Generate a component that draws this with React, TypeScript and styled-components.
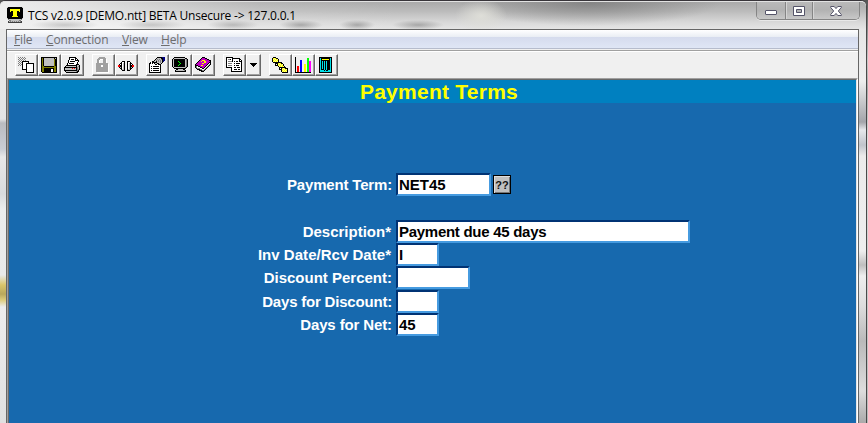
import React from "react";
import styled, { createGlobalStyle } from "styled-components";

const GlobalStyle = createGlobalStyle`
  * { box-sizing: border-box; }
  body { margin: 0; overflow: hidden; background: #b5b5b5; }
`;

const Window = styled.div`
  width: 868px;
  height: 423px;
  display: flex;
  flex-direction: column;
  padding-right: 1px;
  background: linear-gradient(#555, #c9c9c9 60px, #aaa 90px, #ddd 140px, #bbb);
  font-family: "Open Sans", "Noto Sans", sans-serif;
`;

const Frame = styled.div`
  flex: 1;
  display: flex;
  flex-direction: column;
  border-top: 1px solid #38353a;
  border-right: 1px solid #4a4a4a;
  border-top-right-radius: 6px;
  border-top-left-radius: 5px;
  background:
    linear-gradient(#eee0 28px, #e4e4e4 90px, #b9bbc0 94px, #c9cdd4 120px, #e8e8e8 128px, #d9dbdd 165px, #eceded 180px, #e9e9e9 246px, #d9c56a 256px, #b9a75c 265px, #ddcc7c 271px, #ededed 278px, #e0e0e0) left 28px / 6px 394px no-repeat,
    linear-gradient(#e6e6e6 28px, #eee 80px, #a3a5aa 121px, #e6e8eb 129px, #c0c4cb 144px, #ebebeb 155px, #eee 250px, #bfbfbf 264px, #eee 275px, #ddd 305px, #bababa 340px, #ddd 390px, #aaa) right top / 7px 422px no-repeat,
    #e8e8e8;
`;

const TitleBar = styled.header`
  height: 28px;
  display: flex;
  align-items: flex-start;
  padding: 0 7px;
  border-top: 1px solid #e2e2e2;
  border-top-right-radius: 5px;
  border-top-left-radius: 5px;
  background:
    radial-gradient(ellipse 34px 5px at 65px 23px, #9997, transparent),
    radial-gradient(ellipse 34px 5px at 152px 23px, #9997, transparent),
    radial-gradient(ellipse 26px 5px at 233px 23px, #8887, transparent),
    radial-gradient(ellipse 22px 5px at 301px 23px, #7778, transparent),
    radial-gradient(ellipse 18px 5px at 357px 23px, #7778, transparent),
    radial-gradient(ellipse 26px 5px at 418px 23px, #7778, transparent),
    radial-gradient(ellipse 26px 17px at 481px 14px, #deded8, transparent),
    linear-gradient(90deg, #eee 0, #fff9 90px, #fff2 260px, transparent 400px),
    radial-gradient(ellipse 130px 23px at 590px 1px, #777b, transparent),
    linear-gradient(#aaa, #bbb 9px, #d8d8d8 20px, #e5e5e5);
`;

const TitleIcon = styled.div`
  width: 16px;
  height: 16px;
  margin-top: 5px;
`;

const Title = styled.div`
  margin: 5px 0 0 5px;
  font-size: 12px;
  line-height: 17px;
  letter-spacing: -0.21px;
  color: #000;
  white-space: nowrap;
`;

const Controls = styled.div`
  margin-left: auto;
  margin-right: -1px;
  display: flex;
  height: 18px;
  border: 1px solid #858585;
  border-top: 0;
  border-radius: 0 0 5px 5px;
  box-shadow: 0 1px 0 #f5f5f599, inset 1px 0 #ddd9;
`;

const ControlButton = styled.div<{ $w: number }>`
  width: ${(p) => p.$w}px;
  display: flex;
  justify-content: center;
  align-items: center;
  background: linear-gradient(#b9b9b9, #b2b2b2 8px, #c8c8c8);
  & + & { border-left: 1px solid #858585; box-shadow: inset 1px 0 #d5d5d5; }
  &:first-child { border-radius: 0 0 0 4px; }
  &:last-child { border-radius: 0 0 4px 0; }
`;

const Client = styled.div`
  flex: 1;
  margin: 0 7px 0 6px;
  display: flex;
  flex-direction: column;
  border: solid #666;
  border-width: 1px 1px 0 1px;
`;

const MenuBar = styled.nav`
  height: 21px;
  display: flex;
  gap: 14px;
  padding: 1px 0 0 7px;
  border-bottom: 1px solid #a0a0a0;
  background: linear-gradient(#fff, #e9edf4 7px, #d5dbed 7px, #dfe6f5 18px, #b6bccc 18px, #b6bccc 19px, #f0f0f0 19px);
`;

const MenuItem = styled.div<{ $w: number }>`
  width: ${(p) => p.$w}px;
  font-size: 12px;
  line-height: 18px;
  letter-spacing: -0.15px;
  color: #6d6d6d;
  white-space: nowrap;
  &::first-letter { text-decoration: underline; }
`;

const ToolBar = styled.div`
  height: 27px;
  display: flex;
  padding: 2px 0 0 8px;
  background: #f0f0f0;
  border-top: 1px solid #fff;
`;

const ToolButton = styled.div<{ $w?: number; $gap?: number }>`
  width: ${(p) => p.$w ?? 23}px;
  height: 22px;
  margin-left: ${(p) => p.$gap ?? 0}px;
  padding: 2px 0 0 2px;
  background: #f0f0f0;
  border: 1px solid;
  border-color: #fff #696969 #696969 #fff;
  box-shadow: inset -1px -1px #a0a0a0;
`;

const Screen = styled.main`
  flex: 1;
  border-top: 1px solid #a0a0a0;
  border-left: 1px solid #a0a0a0;
  border-right: 1px solid #fff;
  display: flex;
`;

const Content = styled.div`
  flex: 1;
  border-top: 1px solid #696969;
  border-left: 1px solid #696969;
  border-right: 1px solid #e3e3e3;
  background: #1769ae;
  font-family: "Liberation Sans", Arial, sans-serif;
  font-weight: bold;
`;

const Heading = styled.h1`
  height: 23px;
  margin: 0;
  padding-left: 13px;
  background: #0080c0;
  color: #ff0;
  font-size: 21px;
  line-height: 24px;
  letter-spacing: 0.25px;
  text-align: center;
`;

const Form = styled.div`
  padding-top: 70px;
`;

const Row = styled.div<{ $h: number }>`
  height: ${(p) => p.$h}px;
  display: grid;
  grid-template-columns: 383px auto 1fr;
  align-items: start;
`;

const Label = styled.label<{ $track?: number; $required?: boolean }>`
  text-align: right;
  padding-right: ${(p) => (p.$required ? 1 : 0)}px;
  color: #fff;
  font-size: 15px;
  line-height: 23px;
  letter-spacing: ${(p) => p.$track ?? 0}px;
  white-space: nowrap;
`;

const Field = styled.div<{ $w: number; $h?: number; $track?: number }>`
  width: ${(p) => p.$w}px;
  height: ${(p) => p.$h ?? 23}px;
  margin-left: 4px;
  padding-left: 1px;
  border: 2px solid;
  border-color: #003374 #469be0 #469be0 #003374;
  background: #fff;
  color: #000;
  font-size: 15px;
  line-height: 20px;
  letter-spacing: ${(p) => p.$track ?? 0}px;
  white-space: nowrap;
`;

const Lookup = styled.div`
  width: 18px;
  height: 19px;
  margin: 2px 0 0 2px;
  border: 1px solid #000;
  background: #c0c0c0;
  box-shadow: inset 1px 1px #ddd, inset -1px -1px #777;
  font-size: 11px;
  line-height: 18px;
  text-align: center;
  color: #111;
`;

const PALETTE: Record<string, string> = {
  k: "#000", w: "#fff", g: "#808080", s: "#c0c0c0", y: "#ffff00", r: "#f00",
  b: "#0000ff", n: "#000080", o: "#808000", m: "#c000c0", p: "#ff00ff",
  l: "#00ff00", c: "#00e0e8", a: "#a0a0a0", d: "#404040", f: "#ffff90",
};

const Bitmap = styled.svg`
  display: block;
`;

/** Draws a bitmap icon: one character per pixel, "." is transparent. */
function PixelIcon({ rows }: { rows: string[] }) {
  const width = Math.max(...rows.map((r) => r.length));
  return (
    <Bitmap width={width} height={rows.length} shapeRendering="crispEdges">
      {rows.flatMap((row, y) =>
        Array.from(row.matchAll(/([a-z])\1*/g)).map((m) => (
          <rect key={`${m.index}-${y}`} x={m.index} y={y} width={m[0].length} height={1} fill={PALETTE[m[1]]} />
        )),
      )}
    </Bitmap>
  );
}

const icons = {
  app: [
    "skkkkkkkkkkkkkks", "kkkkkkkkkkkkkkkk", "kkkyyyyyyyyyykkk", "kkkyyyyyyyyyykkk", "kkkykkyyyykkykkk",
    "kkkkkkyyyykkkkkk", "kkkkkkyyyykkkkkk", "kkkkkkyyyykkkkkk", "kkkkkkyyyykkkkkk", "kkkkkyyyyyykkkkk",
    "kkkkkkkkkkkkkkkk", "skkkkkkkkkkkkkks", ".gssssssssssssg.", "..ggssssssssgg..", ".dsgsgsgsgsgsgd.", ".dddddddddddddd.",
  ],
  windows: [
    "g.g.g.g.", ".g.g.g.g", "g.g.g.g.", ".g.g.g.g", "g.g.kkkkkkk", ".g.gkwwwwwk", "g.g.kwwwkkkkkkkk",
    ".g.gkwwwkwwwwwwk", "g.g.kwwwkwwwwwwk", "....kwwwkwwwwwwk", "....kwwwkwwwwwwk", "....kwwwkwwwwwwk",
    "....kkkkkwwwwwwk", "........kwwwwwwk", "........kwwwwwwk", "........kkkkkkkk",
  ],
  save: [
    "kkkkkkkkkkkkkkkk", "kokssssssssssksk", "kokssssssssssokk", "kokssssssssssokk", "kokssssssssssokk",
    "kokssssssssssokk", "kokssssssssssokk", "kokssssssssssokk", "kokssssssssssokk", "kookkkkkkkkkkook",
    "kooooooooooooook", "kookkkkkkkkkkook", "kookkkkkkkwwkook", "kookkkkkkkwwkook", "kookkkkkkkwwkook", ".kkkkkkkkkkkkkkk",
  ],
  print: [
    ".....kkkkkkk", ".....kwwwwwkk", ".....kwkkkwkwk", "....kwwwwwwkkkk", "....kwkkkkkwwwk", "....kwwwwwwwwk",
    "...kwkkkkkwwwk", "...kwwwwwwwwkkk", "..kkkkkkkkkkkssk", ".kssssssssssksgk", "kkkkkkkkkkkkkgsk",
    "ksssssssrsrskgsk", "kssssssssssskggk", "kkkkkkkkkkkkkgk.", ".kssssssssssgkk.", "..kkkkkkkkkkkk..",
  ],
  lock: [
    "....aaaaaa", "...aaaaaaaa", "..aaawwwaaaw", "..aaw...aaaw", "..aaw...aaaw", "..aaw...aaaw",
    ".aaaaaaaaaaaa", ".aaaaaaaaaaaaw", ".aaaaawwaaaaaw", ".aaaaawwaaaaaw", ".aaaaaaaaaaaaw",
    ".aaaaaaaaaaaaw", ".aaaaaaaaaaaaw", ".aaaaaaaaaaaaw", ".aaaaaaaaaaaaw", "..wwwwwwwwwwww",
  ],
  connect: [
    "", "", "", "", "....kkk..kkk", "...kwwk..kwwk", "..kkwsk..kwskk", ".kwkwsk..kwskwk", "rrkkwsk..kwskkrr", "rrkkwsk..kwskkrr",
    ".kskwsk..kwsksk", "..kkwsk..kwskk", "...kssk..kssk", "....kkk..kkk",
  ],
  properties: [
    "........kkkkknnn", ".......ksssskknn", "......ksgsgsgknn", ".....ksgsgsgsknn", "...kkssksgsgskn.",
    ".kwkkkkksssgsk..", "kkwkwksskkssk...", "kwwwwwkkwkkk....", "kwwwwwwwwwwk....", "kwkwkkkkkkwk....", "kwwwwwwwwwwk....",
    "kwkwkkkkkkwk....", "kwwwwwwwwwwk....", "kwkwkkkkkkwk....", "kwwwwwwwwwwk....", "kkkkkkkkkkkk....",
  ],
  monitor: [
    "..kkkkkkkkkkk", ".kssssssssssskk", "kskkkkkkkkkkksgk", "kskkkkkkkkkkksgk", "kskkkklkkkkkksgk", "kskkkkklkkkkksgk",
    "kskkkkkklkkkksgk", "kskkkkklkkkkksgk", "kskkkklkkkkkksgk", "kskkkkkkkkkkksgk", ".ksssssssssssgk", "..kkkkkkkkkkkk",
    "....kkssssskk", "...kssssssssgk", "...kkkkkkkkkkk", "",
  ],
  book: [
    ".......kkk", "......kmmmkk", ".....kmmmmmmkk", "....kmmyyymmmmkk", "...kmmymmyymmmmk", "..kmmmmmmyymmmkk",
    ".kmmmmmyymmmmkwk", "kmmmmmmmmmmmkwgk", "kkkmmmyymmmkwgk", "kgwkkmmmmmkwgk", "kgwwwkkmmkwgk", ".kgggwwkkwgk",
    "..kkkggwwgk", "....kkkggk", "......kkk", "",
  ],
  pages: [
    "kkkkkkk", "kwwwwwkkkkkkkk", "kwggkwkwwwwwwkk", "kwwwwwkwwwwwwkwk", "kwggggkwkwkkwkkk", "kwwwwwwwwwwwwwwk",
    "kwggggwwkwkkkkwk", "kwwwwwwwwwwwwwwk", "kwggggwwkwkkkwwk", "kwwwwwwwwwwwwwwk", "kkkkkkwwkkwkkkwk", ".....kwwwwwwwwwk",
    ".....kwwkkkwkkwk", ".....kwwwwwwwwwk", ".....kkkkkkkkkkk", "",
  ],
  arrow: ["", "", "", "", "", "", ".kkkkkkk", "..kkkkk", "...kkk", "....k"],
  chain: [
    ".kkk", "kyfykk", "kfyfyfk", "kyfyfyk", "kfyfyfk", ".kkkkkkkkk", "...kkkyfykk", "...kwkfyfyfk", "...kkkyfyfyk",
    "......kfyfyfk", ".......kkkkkkk", ".......kwkyfykkk", ".......kkkfyfyfk", ".........kyfyfyk", ".........kfyfyfk", "..........kkkkkk",
  ],
  chart: [
    "k", "k............ll", "k............ll", "k....bb......ll", "k....bb......llpp", "k....bb......llpp", "k....bb......llpp",
    "k....bb..yy..llpp", "k....bb..yy..llpp", "k.rr.bb..yy..llpp", "k.rr.bb..yy..llpp", "k.rr.bb..yy..llpp", "k.rr.bb..yy..llpp",
    "k.rr.bb..yy..llpp", "k.rr.bb..yy..llpp", "kkkkkkkkkkkkkkkk",
  ].map((row) => row.replace("..ll", ".ll")),
  trash: [
    ".kkkkkkkkkkkkk", ".kckkkkkkkkkck", ".kckyyyyyyykck", ".kckkkkkkkkkck", ".kckckckckkkck", ".kckckckckkkck", ".kckckckckkkck",
    ".kckckckckkkck", ".kckckckckkkck", ".kckckckckkkck", ".kckckckckkkck", ".kckckckckkkck", ".kckkkckckkkck",
    ".kcccckckkccck", ".kccccccccccck", ".kkkkkkkkkkkkk",
  ],
};

const tools: { icon: keyof typeof icons; gap?: number; w?: number }[] = [
  { icon: "windows" }, { icon: "save" }, { icon: "print" },
  { icon: "lock", gap: 8 }, { icon: "connect" },
  { icon: "properties", gap: 8 }, { icon: "monitor" }, { icon: "book" },
  { icon: "pages", gap: 8 }, { icon: "arrow", w: 15 },
  { icon: "chain", gap: 8 }, { icon: "chart" }, { icon: "trash" },
];

const menus = [["File", 18], ["Connection", 62], ["View", 25], ["Help", 26]] as const;

export default function App() {
  return (
    <Window>
      <GlobalStyle />
      <Frame>
        <TitleBar>
          <TitleIcon><PixelIcon rows={icons.app} /></TitleIcon>
          <Title>TCS v2.0.9 [DEMO.ntt] BETA Unsecure -&gt; 127.0.0.1</Title>
          <Controls>
            <ControlButton $w={28}>
              <svg width="14" height="11"><rect x="1.5" y="5.5" width="11" height="4" rx=".5" fill="#fff" stroke="#555469" /></svg>
            </ControlButton>
            <ControlButton $w={27}>
              <svg width="12" height="10"><path fillRule="evenodd" d="M.5.5h11v9H.5zM3.5 3.5v3h5v-3z" fill="#fff" stroke="#555469" /></svg>
            </ControlButton>
            <ControlButton $w={47}>
              <svg width="12" height="10"><path d="M.7.5h3.5L6 2.6 7.800.5h3.500v1L8.300 5l3 3.500v1H7.800L6 7.400 4.200 9.500H.7v-1l3-3.500-3-3.500z" fill="#fff" stroke="#555469" /></svg>
            </ControlButton>
          </Controls>
        </TitleBar>
        <Client>
          <MenuBar>
            {menus.map(([name, w]) => <MenuItem key={name} $w={w}>{name}</MenuItem>)}
          </MenuBar>
          <ToolBar>
            {tools.map((t) => (
              <ToolButton key={t.icon} $gap={t.gap} $w={t.w}><PixelIcon rows={icons[t.icon]} /></ToolButton>
            ))}
          </ToolBar>
          <Screen>
            <Content>
              <Heading>Payment Terms</Heading>
              <Form>
                <Row $h={47}>
                  <Label $track={-0.17}>Payment Term:</Label><Field $w={95}>NET45</Field><Lookup>??</Lookup>
                </Row>
                <Row $h={23}><Label $required>Description*</Label><Field $w={294} $track={-0.28}>Payment due 45 days</Field></Row>
                <Row $h={23}><Label $required $track={0.03}>Inv Date/Rcv Date*</Label><Field $w={43}>I</Field></Row>
                <Row $h={24}><Label>Discount Percent:</Label><Field $w={74} /></Row>
                <Row $h={23}><Label $track={-0.2}>Days for Discount:</Label><Field $w={43} /></Row>
                <Row $h={23}><Label $track={-0.12}>Days for Net:</Label><Field $w={43}>45</Field></Row>
              </Form>
            </Content>
          </Screen>
        </Client>
      </Frame>
    </Window>
  );
}
